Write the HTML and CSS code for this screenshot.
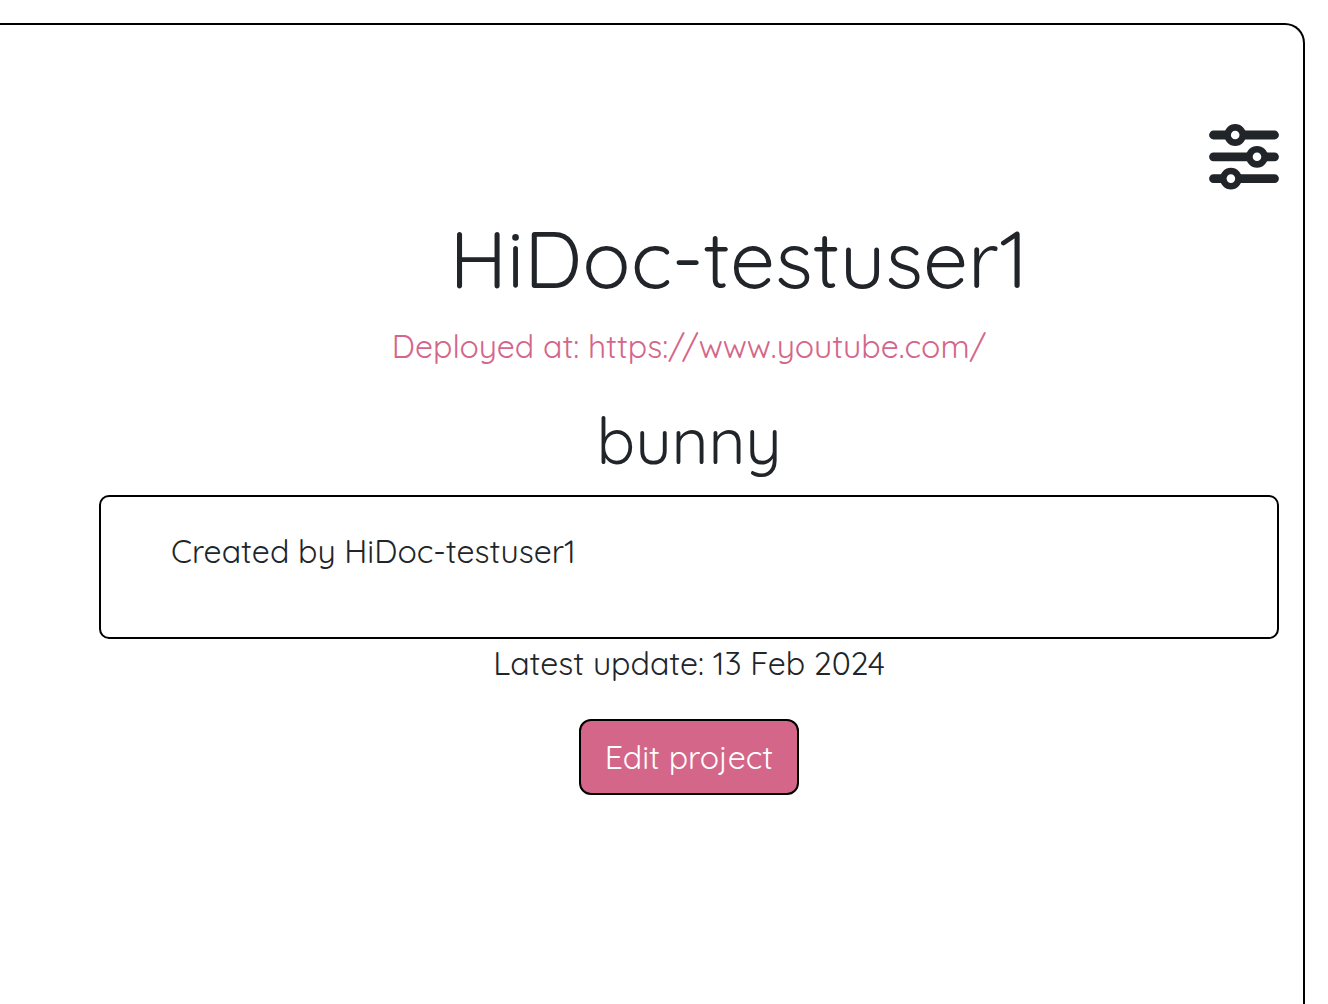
FILE: index.html
```html
<!DOCTYPE html>
<html lang="en">
<head>
  <meta charset="utf-8">
  <meta name="viewport" content="width=device-width, initial-scale=1">
  <title>HiDoc project</title>
  <link rel="stylesheet" href="styles.css">
</head>
<body>
  <main class="panel">
    <button class="settings" type="button" aria-label="Project settings">
      <svg class="settings-icon" viewBox="0 0 70 66" aria-hidden="true">
        <g class="tracks">
          <path d="M4.5 11H65.5M4.5 32.8H65.5M4.5 54.6H65.5"/>
        </g>
        <g class="knobs">
          <circle cx="26.2" cy="11" r="7.6"/>
          <circle cx="48" cy="32.8" r="7.6"/>
          <circle cx="21.9" cy="54.6" r="7.6"/>
        </g>
      </svg>
    </button>
    <h1 class="owner">HiDoc-testuser1</h1>
    <a class="deployed" href="https://www.youtube.com/">Deployed at: https://www.youtube.com/</a>
    <h2 class="project">bunny</h2>
    <section class="description">
      <p class="text">Created by HiDoc-testuser1</p>
    </section>
    <p class="text">Latest update: 13 Feb 2024</p>
    <button class="edit" type="button">Edit project</button>
  </main>
</body>
</html>
```

FILE: styles.css
```css
* {
  box-sizing: border-box;
}

body {
  margin: 0;
  background: #fff;
  color: #212529;
  font-family: Quicksand, Lato, sans-serif;
  font-size: 32px;
  line-height: 48px;
}

h1, h2, p {
  margin: 0;
  font-weight: 400;
}

.panel {
  display: flex;
  flex-direction: column;
  align-items: center;
  min-height: calc(100vh - 23px);
  margin: 23px 23px 0 0;
  padding: 99px 24px 24px 99px;
  border: 2px solid #000;
  border-width: 2px 2px 0 0;
  border-top-right-radius: 20px;
}

.settings {
  align-self: flex-end;
  padding: 0;
  border: 0;
  background: none;
  color: inherit;
  cursor: pointer;
}

.settings-icon {
  display: block;
  width: 70px;
  height: 66px;
  fill: #fff;
  stroke: currentColor;
}

.tracks {
  stroke-width: 8.8;
  stroke-linecap: round;
}

.knobs {
  stroke-width: 6.6;
}

.owner {
  margin-top: 20px;
  padding-left: 100px;
  font-size: 80px;
  line-height: 96px;
}

.deployed {
  margin-top: 16px;
  color: #d46689;
  text-decoration: none;
}

.project {
  margin-top: 32px;
  font-size: 64px;
  line-height: 76px;
}

.description {
  align-self: stretch;
  min-height: 144px;
  margin-top: 17px;
  padding: 30px 70px;
  border: 2px solid #000;
  border-radius: 10px;
}

.text {
  font-size: 32px;
}

.edit {
  margin-top: 32px;
  padding: 12px 24px;
  border: 2px solid #000;
  border-radius: 12px;
  background: #d46689;
  color: #fff;
  font: inherit;
  cursor: pointer;
}
```
